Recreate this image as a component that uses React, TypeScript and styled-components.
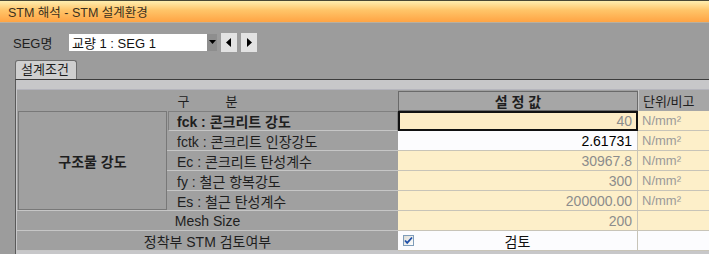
import styled, { createGlobalStyle } from "styled-components";

const GlobalStyle = createGlobalStyle`
  html, body {
    margin: 0;
    padding: 0;
    background: #9c9c9c;
    overflow: hidden;
  }
  body {
    font-family: "Liberation Sans", "Noto Sans CJK KR", sans-serif;
    font-size: 13px;
    color: #1e1e1e;
  }
`;

type Row = {
  label: string;
  value: string;
  unit: string;
  bold?: boolean;
  active?: boolean;
  editable?: boolean;
};

const rows: Row[] = [
  { label: "fck : 콘크리트 강도", value: "40", unit: "N/mm²", bold: true, active: true },
  { label: "fctk : 콘크리트 인장강도", value: "2.61731", unit: "N/mm²", editable: true },
  { label: "Ec : 콘크리트 탄성계수", value: "30967.8", unit: "N/mm²" },
  { label: "fy : 철근 항복강도", value: "300", unit: "N/mm²" },
  { label: "Es : 철근 탄성계수", value: "200000.00", unit: "N/mm²" },
];

const App = () => {
  return (
    <Window>
      <GlobalStyle />
      <TitleBar>STM 해석 - STM 설계환경</TitleBar>
      <Toolbar>
        <FieldLabel>SEG명</FieldLabel>
        <Combo>
          <ComboText>교량 1 : SEG 1</ComboText>
          <ComboButton>
            <svg width="7" height="7" viewBox="0 0 7 7">
              <path d="M0 1h7L3.5 5z" fill="#000" />
            </svg>
          </ComboButton>
        </Combo>
        <NavButton>
          <svg width="6" height="9" viewBox="0 0 6 9">
            <path d="M5 0v9L0 4.5z" fill="#000" />
          </svg>
        </NavButton>
        <NavButton>
          <svg width="6" height="9" viewBox="0 0 6 9">
            <path d="M1 0v9l5-4.5z" fill="#000" />
          </svg>
        </NavButton>
      </Toolbar>
      <TabStrip>
        <Tab>설계조건</Tab>
      </TabStrip>
      <Pane>
        <Grid>
          <HeadCell $span={2}>구&nbsp;&nbsp;&nbsp;&nbsp;&nbsp;&nbsp;&nbsp;&nbsp;&nbsp;&nbsp;분</HeadCell>
          <ValueHead>설&nbsp;정&nbsp;값</ValueHead>
          <UnitHead>단위/비고</UnitHead>
          <GroupCell>구조물 강도</GroupCell>
          {rows.map((r) => (
            <RowFragment key={r.label} row={r} />
          ))}
          <WideLabel>Mesh Size</WideLabel>
          <ValueCell>200</ValueCell>
          <UnitCell />
          <WideLabel>정착부 STM 검토여부</WideLabel>
          <CheckCell>
            <CheckBox>
              <svg width="9" height="9" viewBox="0 0 9 9">
                <path d="M1 4.5l2.2 2.4L8 1.5" stroke="#1f4fa8" strokeWidth="1.8" fill="none" />
              </svg>
            </CheckBox>
            <CheckText>검토</CheckText>
          </CheckCell>
          <UnitCell $white />
        </Grid>
      </Pane>
    </Window>
  );
};

const RowFragment = ({ row }: { row: Row }) => (
  <>
    <SubLabel $bold={row.bold}>{row.label}</SubLabel>
    <ValueCell $active={row.active} $editable={row.editable}>
      {row.value}
    </ValueCell>
    <UnitCell>{row.unit}</UnitCell>
  </>
);

export default App;

const Window = styled.div`
  width: 709px;
  height: 254px;
  display: flex;
  flex-direction: column;
  background: #9c9c9c;
  overflow: hidden;
`;

const TitleBar = styled.div`
  height: 23px;
  box-sizing: border-box;
  border-top: 1px solid #4a4836;
  border-bottom: 1px solid #b8b0a0;
  background: linear-gradient(to bottom, #ffeeb0 0%, #ffc468 45%, #ffa444 100%);
  padding-left: 8px;
  display: flex;
  align-items: center;
  color: #3a3020;
  font-size: 12.5px;
`;

const Toolbar = styled.div`
  height: 37px;
  display: flex;
  align-items: center;
  padding-left: 13px;
  padding-top: 2px;
  box-sizing: border-box;
`;

const FieldLabel = styled.span`
  width: 56px;
  color: #1e1e1e;
`;

const Combo = styled.div`
  width: 148px;
  height: 17px;
  background: #fff;
  display: flex;
  align-items: center;
  justify-content: space-between;
`;

const ComboText = styled.span`
  padding-left: 3px;
  font-size: 13px;
  color: #111;
`;

const ComboButton = styled.div`
  width: 10px;
  height: 17px;
  background: #8e8e8e;
  display: flex;
  align-items: center;
  justify-content: center;
`;

const NavButton = styled.div`
  width: 16px;
  height: 19px;
  margin-left: 4px;
  background: #e2e2e2;
  display: flex;
  align-items: center;
  justify-content: center;
  &:first-of-type {
    margin-left: 5px;
  }
`;

const TabStrip = styled.div`
  height: 19px;
  display: flex;
  align-items: flex-end;
  padding-left: 15px;
`;

const Tab = styled.div`
  width: 62px;
  height: 19px;
  box-sizing: border-box;
  border: 1px solid #6c6c6c;
  border-bottom: none;
  border-radius: 3px 3px 0 0;
  background: #cfcfcf;
  padding-left: 5px;
  line-height: 18px;
  color: #1e1e1e;
`;

const Pane = styled.div`
  flex: 1;
  margin-left: 15px;
  border-top: 1px solid #3c3c3c;
  border-left: 1px solid #5a5a5a;
  background: #c7c7c9;
  padding: 9px 0 0 1px;
`;

const Grid = styled.div`
  display: grid;
  grid-template-columns: 150px 231px 240px 1fr;
  grid-template-rows: 21px repeat(7, 20px);
  background: #a0a0a0;
  border-top: 1px solid #b4b4bc;
  font-size: 14px;
`;

const Cell = styled.div`
  box-sizing: border-box;
  display: flex;
  align-items: center;
  white-space: nowrap;
  overflow: hidden;
`;

const HeadCell = styled(Cell)<{ $span?: number }>`
  grid-column: span ${(p) => p.$span ?? 1};
  justify-content: center;
  background: #a0a0a0;
  font-size: 13px;
`;

const ValueHead = styled(Cell)`
  justify-content: center;
  background: #a6a6a6;
  border: 1px solid #6a6a6a;
  margin-top: 1px;
  font-weight: bold;
`;

const UnitHead = styled(Cell)`
  padding-left: 4px;
  background: #a6a6a6;
  border-left: 1px solid #c8c8c8;
  font-size: 13px;
`;

const GroupCell = styled(Cell)`
  grid-row: 2 / span 5;
  justify-content: center;
  font-weight: bold;
  border: 1px solid #787878;
  margin: 0 0 1px 1px;
`;

const SubLabel = styled(Cell)<{ $bold?: boolean }>`
  padding-left: 10px;
  border-bottom: 1px solid #c6c6c6;
  ${(p) =>
    p.$bold &&
    `
    font-weight: bold;
    border: 1px solid #808080;
    border-bottom-color: #c6c6c6;
    margin-left: 1px;
    padding-left: 8px;
  `}
`;

const WideLabel = styled(Cell)`
  grid-column: span 2;
  justify-content: center;
  border-bottom: 1px solid #c6c6c6;
  border-top: 1px solid #c6c6c6;
  margin-top: -1px;
`;

const ValueCell = styled(Cell)<{ $active?: boolean; $editable?: boolean }>`
  justify-content: flex-end;
  padding-right: 5px;
  background: ${(p) => (p.$editable ? "#fcfcfe" : p.$active ? "#fdecc6" : "#fdefc9")};
  color: ${(p) => (p.$editable ? "#000" : "#8c8c8c")};
  border-bottom: 1px solid #c8c4b8;
  border-right: 1px solid #c8c4b8;
  ${(p) => p.$active && `border: 2px solid #111; padding-right: 4px;`}
`;

const UnitCell = styled(Cell)<{ $white?: boolean }>`
  padding-left: 4px;
  background: ${(p) => (p.$white ? "#fcfcfe" : "#fdefc9")};
  color: #9a9a9a;
  border-bottom: 1px solid #c8c4b8;
  font-size: 13px;
`;

const CheckCell = styled(Cell)`
  background: #fcfcfe;
  border-right: 1px solid #c8c4b8;
  border-bottom: 1px solid #c8c4b8;
  padding-left: 5px;
`;

const CheckBox = styled.div`
  width: 11px;
  height: 11px;
  box-sizing: border-box;
  border: 1px solid #7f9db9;
  background: linear-gradient(135deg, #dcdcd6, #fff);
  display: flex;
  align-items: center;
  justify-content: center;
`;

const CheckText = styled.span`
  flex: 1;
  text-align: center;
  padding-right: 16px;
  color: #111;
`;
